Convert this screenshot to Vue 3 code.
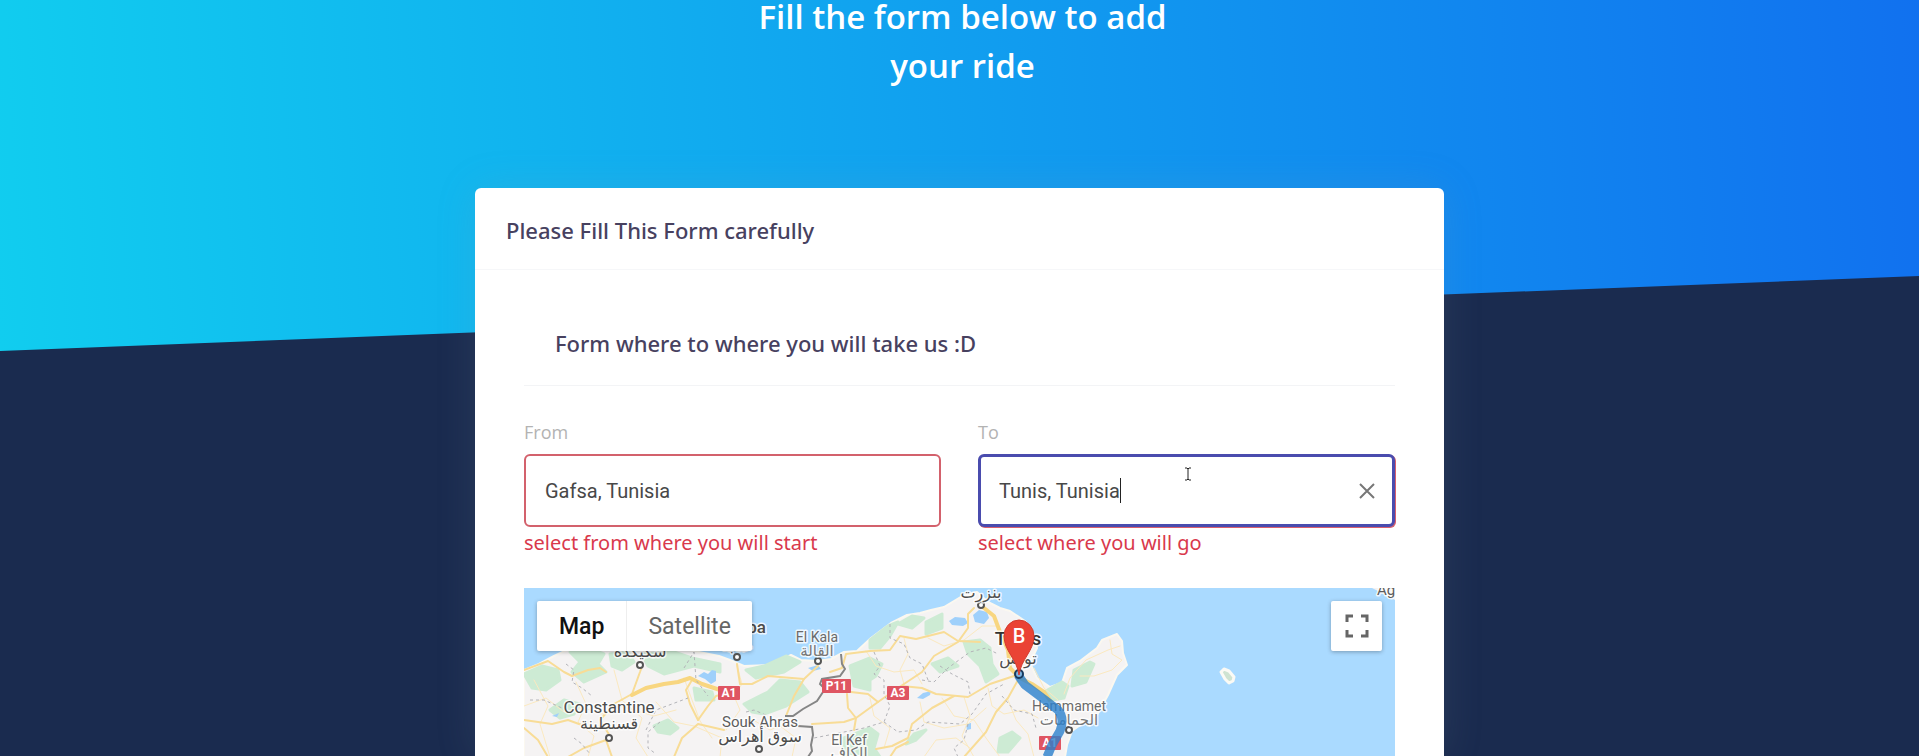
<script setup>
import { ref } from 'vue'

const from = ref('Gafsa, Tunisia')
const to = ref('Tunis, Tunisia')

const forests = [
  'M0 86 L18 78 L34 82 L36 92 L22 102 L8 100 Z',
  'M46 64 L64 60 L80 66 L74 76 L82 84 L60 94 L48 84 L56 74 Z',
  'M86 66 L104 64 L110 74 L98 82 L88 78 Z',
  'M118 66 L150 64 L168 70 L196 76 L196 84 L170 78 L140 86 L124 78 Z',
  'M26 122 L40 112 L56 116 L50 126 L36 130 Z',
  'M130 138 L144 132 L154 140 L146 146 L134 144 Z',
  'M222 82 L240 78 L262 68 L276 74 L260 84 L232 90 Z',
  'M220 116 L244 104 L256 92 L276 94 L284 104 L262 118 L240 126 L228 124 Z',
  'M170 100 L188 104 L190 112 L172 112 Z',
  'M326 78 L346 70 L358 76 L352 88 L346 92 L346 102 L330 98 L328 88 Z',
  'M346 52 L364 38 L374 34 L366 48 L356 60 L346 60 Z',
  'M374 36 L388 28 L400 30 L388 40 Z',
  'M402 34 L418 26 L418 40 L402 46 Z',
  'M440 54 L456 52 L466 60 L468 76 L474 86 L462 94 L456 78 L444 66 Z',
  'M408 76 L424 70 L434 78 L416 84 Z',
  'M520 104 L538 94 L544 98 L540 110 L528 112 Z',
  'M550 82 L566 74 L570 76 L562 94 L548 98 Z',
  'M320 150 L346 140 L354 146 L350 160 L356 169 L320 169 Z',
  'M476 150 L488 144 L496 150 L484 164 L474 164 Z',
  'M390 146 L402 142 L392 152 L382 156 Z'
]
const minorRoads = [
  'M0 118 L22 110 L40 124 L60 120 L78 126 L96 118 L130 128 L152 122',
  'M10 92 L24 118 L16 136 L26 169',
  'M52 94 L62 116 L54 134 L70 148 L64 169',
  'M90 82 L98 112 L118 130 L112 150 L124 169',
  'M132 114 L150 134 L170 138 L198 150 L196 169',
  'M160 90 L168 112 L176 133 L188 150',
  'M213 78 L218 96 L210 108 L216 122 L202 142',
  'M226 130 L246 142 L256 138 L272 150 L268 169',
  'M342 63 L352 78 L370 84 L390 82 L398 96',
  'M380 50 L384 66 L376 82 L380 96',
  'M404 50 L420 58 L440 52 L458 38 L474 38',
  'M418 110 L430 128 L450 132 L462 150 L476 169',
  'M396 114 L400 134 L420 140 L444 136 L462 120',
  'M464 100 L468 118 L480 126 L500 122 L514 130',
  'M484 112 L492 132 L504 146 L510 169',
  'M346 110 L350 128 L366 140 L360 160',
  'M440 109 L446 128 L438 148 L450 169',
  'M400 169 L412 152 L432 150 L446 160',
  'M540 106 L546 90 L562 72 L584 62 L596 58',
  'M586 52 L588 66 L598 72 L588 82 L570 88 L556 88',
  'M510 80 L520 100 L534 112'
]
const mainRoads = [
  'M0 82 L24 73 L40 84 L48 88 L64 82 L76 80 L82 84',
  'M0 132 L28 136 L44 132 L66 140 L80 138',
  'M86 148 L76 132 L90 116 L108 106 L116 84 L118 78',
  'M0 140 L14 152 L24 169',
  'M44 169 L60 160 L82 152 L88 169',
  'M150 169 L158 150 L174 136 L200 142',
  'M174 132 L166 116 L162 102 L168 92',
  'M174 132 L184 118 L192 108 L200 106',
  'M213 76 L216 96 L228 96 L244 88 L280 91 L294 78',
  'M280 91 L270 108 L262 128',
  'M306 84 L318 80 L322 66 L346 63 L366 62 L376 48 L392 51 L420 44 L434 53 L456 54',
  'M327 104 L344 106 L354 114 L332 130 L320 134 L288 136',
  'M323 106 L324 120 L332 130 L330 142',
  'M354 114 L374 100 L398 84 L410 68 L434 54 L444 40 L444 26 L450 20',
  'M378 98 L398 100 L412 106 L444 109 L466 96 L490 88',
  'M430 108 L408 120 L388 136 L384 150 L368 158 L352 161',
  'M494 92 L484 110 L472 124 L462 144 L440 169',
  'M384 154 L372 160 L366 169'
]
const borders = [
  'M42 76 L50 82 L48 94 L58 100 L68 108',
  'M6 112 L20 112 L38 120 L50 124',
  'M50 150 L58 156 L66 166',
  'M122 142 L132 122 L148 116 L164 110',
  'M136 134 L124 144 L124 160 L132 166',
  'M160 80 L170 64 L172 92 L184 108',
  'M222 124 L230 122 L244 128',
  'M366 36 L366 50 L380 56 L386 70 L398 76 L404 92',
  'M350 64 L356 78 L350 86 L360 92 L360 106 L366 118 L360 134 L340 140 L290 150',
  'M398 92 L410 94 L424 80 L446 64 L462 60 L474 66',
  'M416 78 L428 86 L444 94 L446 106',
  'M360 134 L374 144 L392 142 L404 134 L436 136 L448 126 L462 106 L480 96',
  'M444 136 L440 152 L430 160 L434 169',
  'M478 108 L490 122 L508 126 L512 140'
]
const places = [
  { x: 213, y: 45, name: 'Annaba', kind: 'city' },
  { x: 213, y: 63, name: 'عنابة', kind: 'arabic' },
  { x: 116, y: 69, name: 'سكيكدة', kind: 'arabic' },
  { x: 293, y: 54, name: 'El Kala', kind: 'town' },
  { x: 293, y: 68, name: 'القالة', kind: 'arabic soft' },
  { x: 85, y: 125, name: 'Constantine', kind: 'place' },
  { x: 85, y: 141, name: 'قسنطينة', kind: 'arabic' },
  { x: 236, y: 139, name: 'Souk Ahras', kind: 'large-town' },
  { x: 236, y: 154, name: 'سوق أهراس', kind: 'arabic' },
  { x: 325, y: 157, name: 'El Kef', kind: 'town' },
  { x: 325, y: 170, name: 'الكاف', kind: 'arabic soft' },
  { x: 457, y: 10, name: 'بنزرت', kind: 'arabic' },
  { x: 494, y: 57, name: 'Tunis', kind: 'capital' },
  { x: 494, y: 76, name: 'تونس', kind: 'arabic' },
  { x: 545, y: 123, name: 'Hammamet', kind: 'town' },
  { x: 545, y: 137, name: 'الحمامات', kind: 'arabic soft' },
  { x: 862, y: 7, name: 'Ag', kind: 'large-town' }
]
const dots = [[213, 69], [116, 77], [294, 73], [85, 150], [235, 161], [457, 17], [545, 142]]
const shields = [
  { x: 194, y: 98, w: 22, name: 'A1' },
  { x: 298, y: 91, w: 29, name: 'P11' },
  { x: 363, y: 98, w: 22, name: 'A3' },
  { x: 515, y: 148, w: 22, name: 'A1' }
]
</script>

<template>
  <main class="page">
    <div class="backdrop"></div>
    <h1 class="headline">Fill the form below to add your ride</h1>

    <form class="card" @submit.prevent>
      <header class="card-head"><h2>Please Fill This Form carefully</h2></header>
      <div class="card-body">
        <h3 class="section-title">Form where to where you will take us :D</h3>

        <div class="fields">
          <div class="field">
            <label for="from">From</label>
            <div class="control"><input id="from" v-model="from" type="text" aria-describedby="from-error" /></div>
            <p id="from-error" class="error">select from where you will start</p>
          </div>
          <div class="field">
            <label for="to">To</label>
            <div class="control active">
              <input id="to" v-model="to" type="text" aria-describedby="to-error" />
              <span class="caret"></span>
              <svg class="pointer" width="8" height="16" viewBox="0 0 8 16" aria-hidden="true">
                <path d="M1 2h2l1 1 1-1h2M4 2v12M1 14h2l1-1 1 1h2" fill="none" stroke="#222" />
              </svg>
              <button class="clear" type="button" aria-label="Clear" @click="to = ''">
                <svg width="16" height="16" viewBox="0 0 16 16"><path d="M1 1l14 14M15 1L1 15" fill="none" stroke="#777" stroke-width="2" /></svg>
              </button>
            </div>
            <p id="to-error" class="error">select where you will go</p>
          </div>
        </div>

        <div class="map">
          <svg class="map-canvas" viewBox="0 0 871 169" preserveAspectRatio="xMinYMin slice" role="img" aria-label="Map of northern Tunisia">
            <rect width="871" height="169" fill="#aadaff" />
            <path
              d="M0 82L15 76 30 68 45 61 70 56 100 60 140 57 165 62 195 68 206 72 220 78 243 77 257 72 267 67 277 72 293 73 307 71 320 64 333 63 347 50 367 35 383 27 396 25 407 22 420 19 430 13 440 7 453 4 464 14 476 20 486 23 501 33 508 43 513 60 506 75 513 90 526 99 538 95 543 80 556 73 573 60 578 52 593 46 598 53 599 65 603 77 593 87 584 107 573 127 559 135 548 143 543 157 541 169H0Z"
              fill="#f5f3f3" stroke="#fbf8f0" stroke-width="2" stroke-linejoin="round"
            />
            <path d="M848 0H871V12L860 6Z" fill="#f5f3f3" />
            <path d="M697 84l3-3 5 2 5 6-1 4-4 2-4-4z" fill="#cfe3d2" stroke="#fbfaf5" stroke-width="3" stroke-linejoin="round" />
            <path v-for="d in forests" :key="d" :d="d" fill="#cdebd4" stroke="#cdebd4" stroke-width="3" stroke-linejoin="round" />
            <g fill="#9fd0fb">
              <path d="M174 88l6-4 4 2 4-4 4 1v10l-5 3-6-5z" />
              <path d="M425 33l6-4 10 1 3 5-5 3-11-1z" />
              <path d="M449 27l6-5 8 2 2 6-5 6-9-2z" />
              <path d="M393 110l6-5 8-2-1 4-7 4z" />
              <path d="M284 80l10-3 3 4-8 2z" />
              <path d="M442 136l5-1v6l-4 1z" />
              <path d="M28 128l7-3-2 4z" />
            </g>
            <path v-for="d in minorRoads" :key="d" :d="d" class="road minor" />
            <path v-for="d in mainRoads" :key="d" :d="d" class="road main" />
            <path class="road trunk" d="M108 107L122 100 140 96 154 94 166 90 178 96 196 102" />
            <path class="road trunk" d="M460 20L470 28 476 44 484 62 486 80 494 88" />
            <path class="road trunk" d="M496 90L508 96 520 104 530 118" />
            <path v-for="d in borders" :key="d" :d="d" class="region" />
            <path class="country" d="M317 66l1 10 3 5-5 7-18 3-2 5 5 5-8 12-14 8-10 7h-8M274 138l14 1 1 8-2 10 1 6-4 6" />

            <circle v-for="d in dots" :key="d[0]" :cx="d[0]" :cy="d[1]" r="3" fill="#fff" stroke="#555" stroke-width="2" />
            <g v-for="s in shields" :key="s.x">
              <rect :x="s.x" :y="s.y" :width="s.w" height="14" rx="1" fill="#df5562" />
              <text :x="s.x + s.w / 2" :y="s.y + 11" class="shield">{{ s.name }}</text>
            </g>
            <text v-for="p in places" :key="p.name" :x="p.x" :y="p.y" class="label" :class="p.kind">{{ p.name }}</text>

            <path d="M494 87L501 97 521 112 534 122Q541 130 536 143L528 157 523 169" fill="none" stroke="#2b80cc" stroke-opacity=".8" stroke-width="9" stroke-linejoin="round" />
            <circle cx="495" cy="86" r="4" fill="#7db3df" stroke="#183a5e" stroke-width="2" />
            <path d="M495 87C493 71 480 63 480 48A15 16 0 0 1 510 48C510 63 497 71 495 87Z" fill="#ea4335" stroke="#d13a2e" />
            <text x="495" y="55" class="pin">B</text>
          </svg>

          <div class="map-types">
            <button class="selected" type="button">Map</button>
            <button type="button">Satellite</button>
          </div>
          <button class="fullscreen" type="button" aria-label="Toggle fullscreen view">
            <svg width="24" height="24" viewBox="0 0 24 24"><path d="M2 8V2h6M16 2h6v6M22 16v6h-6M8 22H2v-6" fill="none" stroke="#666" stroke-width="3" /></svg>
          </button>
        </div>
      </div>
    </form>
  </main>
</template>

<style>
body {
  margin: 0;
}
</style>

<style scoped>
* {
  box-sizing: border-box;
}
.page {
  position: relative;
  display: flex;
  flex-direction: column;
  align-items: center;
  height: 100vh;
  overflow: hidden;
  background: #1a2b4f;
  font-family: "Noto Sans", "Open Sans", sans-serif;
}
.backdrop {
  position: absolute;
  inset: 0 0 auto;
  height: 351px;
  background: linear-gradient(87deg, #11cdef 0%, #1171ef 100%);
  clip-path: polygon(0 0, 100% 0, 100% 276px, 0 100%);
}
h1, h2, h3, p {
  margin: 0;
}
.headline {
  position: relative;
  width: 472px;
  max-width: 100%;
  margin-top: -8px;
  margin-bottom: 98px;
  padding-left: 6px;
  color: #fff;
  font-family: "Open Sans", "Noto Sans", sans-serif;
  font-size: 33px;
  font-weight: 600;
  line-height: 49px;
  text-align: center;
}
.card {
  position: relative;
  display: flex;
  flex: 1;
  flex-direction: column;
  width: 969px;
  max-width: 100%;
  min-height: 0;
  border-radius: 6px 6px 0 0;
  background: #fff;
  box-shadow: 0 0 40px rgba(136, 152, 170, 0.15);
}
.card-head {
  padding: 27px 31px 24px;
  border-bottom: 1px solid #f6f7f9;
}
h2, h3 {
  color: #47415f;
  font-size: 22px;
  font-weight: 500;
  line-height: 30px;
}
.card-body {
  display: flex;
  flex: 1;
  flex-direction: column;
  min-height: 0;
  padding: 31px 49px 0;
}
.section-title {
  padding: 27px 31px;
  border-bottom: 1px solid #f3f4f6;
}
.fields {
  display: grid;
  grid-template-columns: 1fr 1fr;
  gap: 37px;
  margin-top: 32px;
}
.field {
  display: flex;
  flex-direction: column;
}
.field label {
  margin-bottom: 8px;
  color: #b3b3b3;
  font-family: "Open Sans", "Noto Sans", sans-serif;
  font-size: 18px;
  line-height: 28px;
}
.control {
  position: relative;
  display: flex;
  height: 73px;
  border: 2px solid #d3616c;
  border-radius: 6px;
  background: #fff;
}
.control.active {
  border: 3px solid #4a4cae;
  box-shadow: 1px 1px 0 #d9606e;
}
.control input {
  flex: 1;
  min-width: 0;
  padding: 0 19px;
  border: 0;
  outline: 0;
  background: transparent;
  color: #484848;
  font-family: Roboto, sans-serif;
  font-size: 20px;
}
.control.active input {
  padding: 0 18px;
}
.caret {
  position: absolute;
  top: 21px;
  left: 139px;
  width: 1px;
  height: 25px;
  background: #222;
}
.pointer {
  position: absolute;
  top: 9px;
  left: 203px;
}
.clear {
  display: flex;
  align-items: center;
  padding: 0 17px;
  border: 0;
  background: transparent;
}
.error {
  color: #d9394c;
  font-size: 20px;
  line-height: 32px;
}
.map {
  position: relative;
  flex: 1;
  min-height: 0;
  margin-top: 29px;
  overflow: hidden;
  font-family: Roboto, "DejaVu Sans", sans-serif;
}
.map-canvas {
  display: block;
  width: 100%;
  height: 100%;
}
.map-types {
  position: absolute;
  top: 13px;
  left: 13px;
  display: flex;
  border-radius: 2px;
  background: #fff;
  box-shadow: 0 1px 4px rgba(0, 0, 0, 0.3);
}
.map-types button {
  height: 50px;
  padding: 0 21px;
  border: 0;
  background: transparent;
  color: #666;
  font-family: Roboto, sans-serif;
  font-size: 23px;
}
.map-types .selected {
  padding: 0 22px;
  border-right: 1px solid #eee;
  color: #111;
  font-weight: 500;
}
.fullscreen {
  position: absolute;
  top: 13px;
  right: 13px;
  display: flex;
  align-items: center;
  justify-content: center;
  width: 51px;
  height: 50px;
  padding: 0;
  border: 0;
  border-radius: 2px;
  background: #fff;
  box-shadow: 0 1px 4px rgba(0, 0, 0, 0.3);
}
.road {
  fill: none;
  stroke-linejoin: round;
  stroke-linecap: round;
}
.minor {
  stroke: #fbe9c0;
  stroke-width: 1;
}
.main {
  stroke: #f8dc96;
  stroke-width: 2;
}
.trunk {
  stroke: #f8d680;
  stroke-width: 4;
}
.region {
  fill: none;
  stroke: #b3b3b8;
  stroke-dasharray: 3 3;
}
.country {
  fill: none;
  stroke: #858585;
  stroke-width: 2;
}
.label {
  fill: #4c4c4c;
  stroke: #fff;
  stroke-opacity: 0.8;
  stroke-width: 3;
  stroke-linejoin: round;
  paint-order: stroke;
  font-size: 15px;
  text-anchor: middle;
}
.town {
  fill: #6a6a6a;
  font-size: 14px;
}
.large-town {
  fill: #5c5c5c;
}
.place {
  font-size: 17px;
}
.arabic {
  font-size: 16px;
}
.city {
  font-size: 17px;
  font-weight: 500;
}
.capital {
  fill: #333;
  font-size: 19px;
  font-weight: 500;
}
.soft {
  fill: #777;
  font-size: 15px;
}
.shield {
  fill: #fff;
  font-size: 12px;
  font-weight: 700;
  text-anchor: middle;
}
.pin {
  fill: #fff;
  font-size: 20px;
  font-weight: 500;
  text-anchor: middle;
}
</style>
